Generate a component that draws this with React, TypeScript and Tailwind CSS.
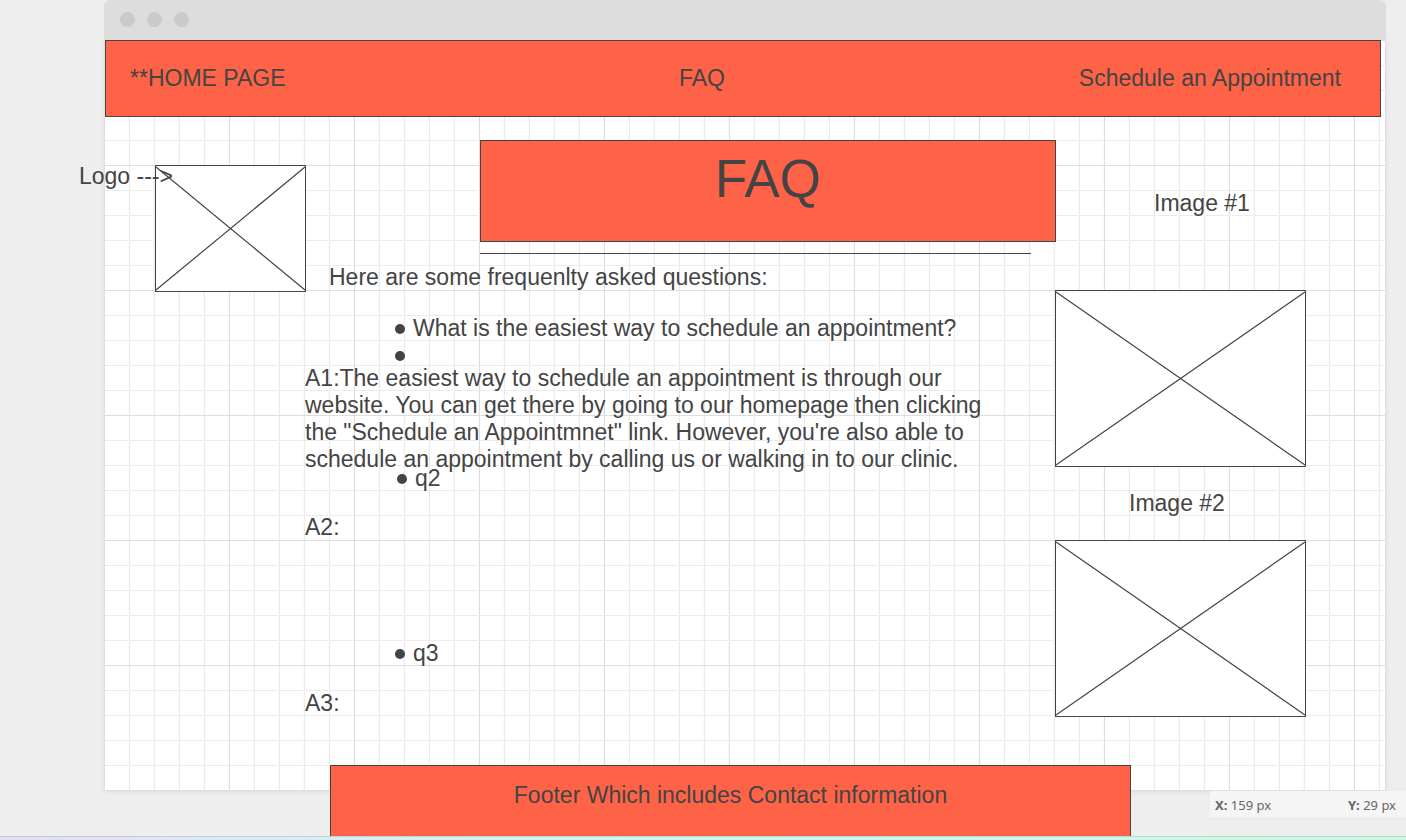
import type { ReactNode } from "react";

const gridStyle =
  "bg-white [background-image:linear-gradient(to_left,#dedede_1px,transparent_1px),linear-gradient(to_bottom,#dedede_1px,transparent_1px),linear-gradient(to_left,#ebebeb_1px,#fafafa_1px,#fafafa_2px,transparent_2px),linear-gradient(to_bottom,#ebebeb_1px,transparent_1px)] [background-size:125px_125px,125px_125px,25px_25px,25px_25px]";

function ImagePlaceholder({ className = "", width, height, label }: { className?: string; width: number; height: number; label: string }) {
  return (
    <svg
      className={`shrink-0 ${className}`}
      width={width}
      height={height}
      viewBox={`0 0 ${width} ${height}`}
      role="img"
      aria-label={label}
    >
      <rect x="0.5" y="0.5" width={width - 1} height={height - 1} fill="#fff" stroke="#444" />
      <path
        d={`M1 2L${width - 1} ${height - 2}M1 ${height - 2}L${width - 1} 2`}
        stroke="#444"
        strokeWidth="1.2"
        fill="none"
      />
    </svg>
  );
}

function Bullet({ children }: { children?: ReactNode }) {
  return (
    <li className="flex h-[27px] items-center gap-2">
      <span className="size-[10px] shrink-0 rounded-full bg-[#444]" />
      {children}
    </li>
  );
}

export default function App() {
  return (
    <div className="flex min-h-screen flex-col bg-[#eee] font-['Liberation_Sans',Arial,sans-serif] text-[23px] leading-[27px] text-[#444]">
      <div className="relative flex-1 overflow-hidden pr-5 pl-[104px]">
        <div className="relative z-10 flex h-10 items-start gap-3 rounded-t-md bg-[#ddd] px-4 pt-3">
          <span className="size-[15px] rounded-full bg-[#cacaca]" />
          <span className="size-[15px] rounded-full bg-[#cacaca]" />
          <span className="size-[15px] rounded-full bg-[#cacaca]" />
        </div>

        <main className={`mx-px flex flex-col shadow-[0_0_0_1px_#dfdfdf,0_1px_6px_rgba(0,0,0,0.1)] ${gridStyle}`}>
          <nav className="z-10 mr-1 flex h-[77px] items-center border border-[#444] bg-[#ff6347] pr-[39px] pl-6">
            <a href="#home" className="w-[549px]">**HOME PAGE</a>
            <a href="#faq">FAQ</a>
            <a href="#schedule" className="ml-auto">Schedule an Appointment</a>
          </nav>

          <div className="flex">
            <aside className="w-[200px] shrink-0 pt-12 pl-[50px]">
              <figure className="relative">
                <ImagePlaceholder width={151} height={127} label="Logo" />
                <figcaption className="absolute -top-0.5 -left-19 whitespace-nowrap">Logo ---&gt;</figcaption>
              </figure>
            </aside>

            <section className="flex w-[751px] shrink-0 flex-col pt-[23px]">
              <h1 className="ml-[175px] h-[102px] border border-[#444] bg-[#ff6347] pt-2 text-center text-[53px] leading-[60px]">
                FAQ
              </h1>
              <hr className="mt-[11px] mr-[25px] ml-[175px] border-t border-[#444]" />
              <p className="mt-[10px] ml-6">Here are some frequenlty asked questions:</p>

              <ul className="mt-6 ml-[90px]">
                <Bullet>What is the easiest way to schedule an appointment?</Bullet>
                <Bullet />
              </ul>
              <p className="-mt-1 w-[690px]">
                A1:The easiest way to schedule an appointment is through our website. You can get there by going to our
                homepage then clicking the "Schedule an Appointmnet" link. However, you're also able to schedule an
                appointment by calling us or walking in to our clinic.
              </p>
              <ul className="-mt-2 ml-[92px]">
                <Bullet>q2</Bullet>
              </ul>
              <p className="mt-[22px]">A2:</p>
              <ul className="mt-[99px] ml-[90px]">
                <Bullet>q3</Bullet>
              </ul>
              <p className="mt-[23px]">A3:</p>
            </section>

            <aside className="-ml-px flex shrink-0 flex-col pt-[73px]">
              <p className="ml-[99px]">Image #1</p>
              <ImagePlaceholder className="mt-[73px]" width={251} height={177} label="Image 1" />
              <p className="mt-[23px] ml-[74px]">Image #2</p>
              <ImagePlaceholder className="mt-[23px]" width={251} height={177} label="Image 2" />
            </aside>
          </div>

          <footer className="mt-12 -mb-[46px] ml-[225px] h-[71px] w-[801px] border border-b-0 border-[#444] bg-[#ff6347] pt-4 text-center">
            Footer Which includes Contact information
          </footer>
        </main>

        <div className="absolute right-0 bottom-[19px] flex h-[26px] w-[196px] items-center justify-between bg-[#f5f5f5] pt-0.5 pr-[10px] pl-[5px] font-['Noto_Sans',sans-serif] text-[13px] leading-[18px] text-[#666]">
          <span><b>X:</b> 159 px</span>
          <span><b>Y:</b> 29 px</span>
        </div>
      </div>
      <div className="h-1 border-t border-black/10 bg-linear-to-r from-[#e3dff5] via-[#cbf7f3] via-45% to-[#cdf6e0]" />
    </div>
  );
}
